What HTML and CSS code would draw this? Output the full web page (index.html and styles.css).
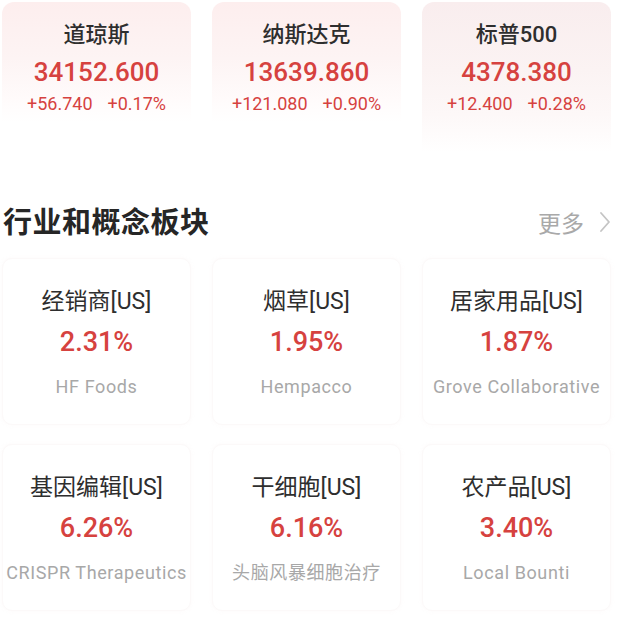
FILE: index.html
```html
<!DOCTYPE html>
<html lang="zh-CN">
<head>
<meta charset="utf-8">
<link rel="stylesheet" href="styles.css">
</head>
<body>
<div class="page">
  <div class="indices">
    <div class="index">
      <div class="idx-name">道琼斯</div>
      <div class="idx-value">34152.600</div>
      <div class="idx-change"><span>+56.740</span><span>+0.17%</span></div>
    </div>
    <div class="index">
      <div class="idx-name">纳斯达克</div>
      <div class="idx-value">13639.860</div>
      <div class="idx-change"><span>+121.080</span><span>+0.90%</span></div>
    </div>
    <div class="index index-alt">
      <div class="idx-name">标普500</div>
      <div class="idx-value">4378.380</div>
      <div class="idx-change"><span>+12.400</span><span>+0.28%</span></div>
    </div>
  </div>

  <div class="section-head">
    <div class="section-title">行业和概念板块</div>
    <div class="more">更多
      <svg class="chev" viewBox="0 0 12 22" width="12" height="22"><path d="M2 2 L10 11 L2 20" fill="none" stroke="#c4c4c4" stroke-width="1.8" stroke-linecap="round" stroke-linejoin="round"/></svg>
    </div>
  </div>

  <div class="sectors">
    <div class="sector">
      <div class="s-name">经销商[US]</div>
      <div class="s-pct">2.31%</div>
      <div class="s-lead">HF Foods</div>
    </div>
    <div class="sector">
      <div class="s-name">烟草[US]</div>
      <div class="s-pct">1.95%</div>
      <div class="s-lead">Hempacco</div>
    </div>
    <div class="sector">
      <div class="s-name">居家用品[US]</div>
      <div class="s-pct">1.87%</div>
      <div class="s-lead">Grove Collaborative</div>
    </div>
    <div class="sector">
      <div class="s-name">基因编辑[US]</div>
      <div class="s-pct">6.26%</div>
      <div class="s-lead">CRISPR Therapeutics</div>
    </div>
    <div class="sector">
      <div class="s-name">干细胞[US]</div>
      <div class="s-pct">6.16%</div>
      <div class="s-lead">头脑风暴细胞治疗</div>
    </div>
    <div class="sector">
      <div class="s-name">农产品[US]</div>
      <div class="s-pct">3.40%</div>
      <div class="s-lead">Local Bounti</div>
    </div>
  </div>
</div>
</body>
</html>
```

FILE: styles.css
```css
* { box-sizing: border-box; }
html, body { margin: 0; padding: 0; background: #ffffff; }
body {
  font-family: Roboto, "Noto Sans CJK SC", "Noto Sans", sans-serif;
  width: 617px;
  height: 619px;
  overflow: hidden;
}
.page { padding: 2px 6px 0 2px; }

.indices {
  display: grid;
  grid-template-columns: repeat(3, 1fr);
  column-gap: 21px;
}
.index {
  height: 150px;
  border-radius: 12px 12px 0 0;
  background: linear-gradient(180deg, #fdeeee 0%, #fdf4f4 38%, #fffbfb 65%, #ffffff 80%);
  text-align: center;
  padding-top: 19px;
}
.index-alt {
  background: linear-gradient(180deg, #f9edee 0%, #fbf3f3 45%, #fdf8f8 75%, #ffffff 100%);
}
.idx-name {
  font-size: 22px;
  line-height: 28px;
  color: #2e2e2e;
  font-weight: 500;
}
.idx-value {
  margin-top: 8px;
  font-size: 26px;
  line-height: 30px;
  color: #d6423f;
  font-weight: 500;
}
.idx-change {
  margin-top: 5px;
  font-size: 18px;
  line-height: 24px;
  color: #d6423f;
  display: flex;
  justify-content: center;
  gap: 15px;
}

.section-head {
  margin-top: 48px;
  height: 40px;
  display: flex;
  align-items: center;
  justify-content: space-between;
  padding-left: 1px;
}
.section-title {
  font-size: 29px;
  font-weight: 700;
  color: #262626;
  letter-spacing: 0.5px;
}
.more {
  display: flex;
  align-items: center;
  gap: 15px;
  font-size: 23px;
  color: #a9a9a9;
  margin-top: 4px;
}
.chev { display: block; }

.sectors {
  margin-top: 18px;
  display: grid;
  grid-template-columns: repeat(3, 1fr);
  grid-auto-rows: 167px;
  column-gap: 21px;
  row-gap: 19px;
}
.sector {
  border-radius: 10px;
  background: #ffffff;
  border: 1px solid #fcf9f9;
  box-shadow: 0 0 4px rgba(235, 210, 210, 0.1);
  text-align: center;
  padding-top: 28px;
}
.s-name {
  font-size: 23px;
  line-height: 30px;
  color: #2e2e2e;
}
.s-pct {
  margin-top: 10px;
  font-size: 27px;
  line-height: 30px;
  font-weight: 500;
  color: #d6423f;
}
.s-lead {
  margin-top: 15px;
  font-size: 18px;
  line-height: 30px;
  color: #a8a8a8;
  letter-spacing: 0.6px;
  white-space: nowrap;
}
```
